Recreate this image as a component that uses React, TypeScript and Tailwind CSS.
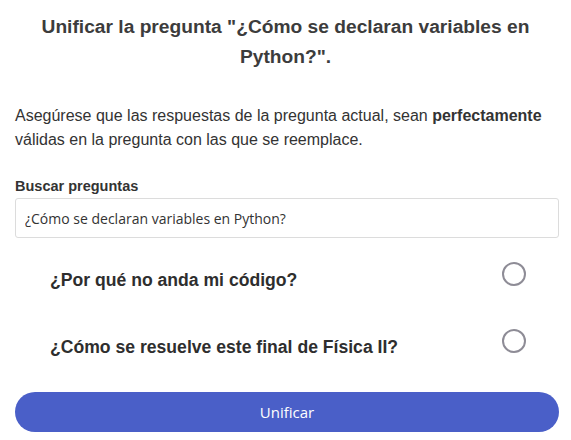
import React from "react";

export default function App() {
  const questions = [
    "¿Por qué no anda mi código?",
    "¿Cómo se resuelve este final de Física II?",
  ];
  return (
    <div className="w-[571px] h-[440px] bg-white pl-[15px] pr-[12px] pt-[12px] text-[#333]" style={{ fontFamily: '"Liberation Sans", Arial, sans-serif' }}>
      <h1 className="text-center text-[19.2px] font-bold leading-[30px] text-[#3c3c3c] pl-[20px] pr-[23px]">
        Unificar la pregunta "¿Cómo se declaran variables en Python?".
      </h1>
      <p className="mt-[32px] text-[16px] leading-[24px] text-[#333]">
        Asegúrese que las respuestas de la pregunta actual, sean <b>perfectamente</b> válidas en la pregunta con las que se reemplace.
      </p>
      <label className="block mt-[24px] text-[14.5px] font-bold leading-[20px] text-[#333]">Buscar preguntas</label>
      <input
        className="block w-full h-[40px] mt-[2px] border border-[#dcdcdc] rounded-[3px] px-[9px] text-[14px] text-[#333] outline-none"
        style={{ fontFamily: '"Open Sans", "Noto Sans", sans-serif' }}
        defaultValue="¿Cómo se declaran variables en Python?"
      />
      <div className="flex flex-col mt-[24px] gap-[43px]">
        {questions.map((q) => (
          <div key={q} className="flex items-start justify-between pl-[35px] pr-[33px] h-[24px]">
            <span className="text-[17.6px] font-bold leading-[24px] text-[#2e2e2e] mt-[6px]">{q}</span>
            <span className="block w-[24px] h-[24px] rounded-full border-2 border-[#8e8c96]" />
          </div>
        ))}
      </div>
      <button
        className="mt-[39px] w-full h-[40px] rounded-full bg-[#4a5fc8] text-white text-[15px]"
        style={{ fontFamily: '"Open Sans", "Noto Sans", sans-serif' }}
      >
        Unificar
      </button>
    </div>
  );
}
